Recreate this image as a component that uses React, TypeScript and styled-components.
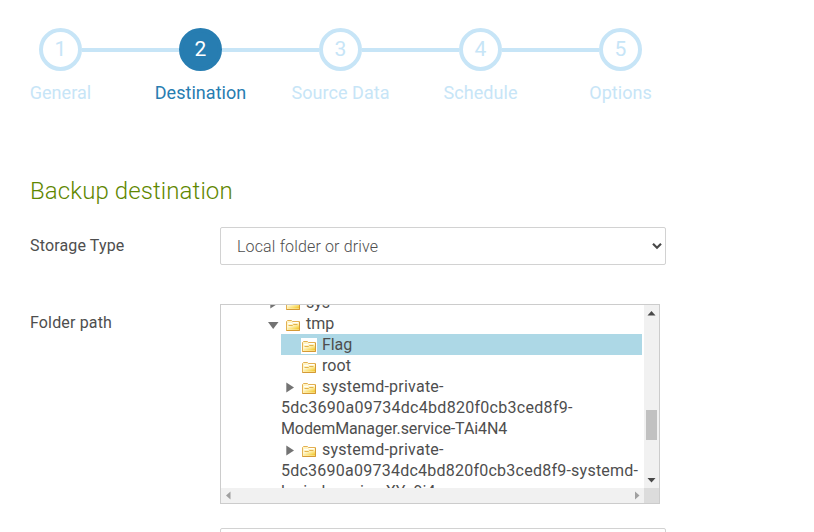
import React, { Fragment } from 'react';
import styled, { createGlobalStyle } from 'styled-components';

const GlobalStyle = createGlobalStyle`
  *, *::before, *::after { box-sizing: border-box; }
  body {
    margin: 0;
    background: #fff;
    color: #4e4e4e;
    font-family: Roboto, 'Liberation Sans', sans-serif;
    font-size: 16px;
    overflow: hidden;
  }
`;

const Page = styled.main`
  height: 532px;
  overflow: hidden;
  padding-top: 28px;
`;

const Steps = styled.nav`
  display: flex;
  padding-left: 39px;
  height: 76px;
`;

const Step = styled.div<{ $active?: boolean }>`
  display: flex;
  flex: none;
  flex-direction: column;
  align-items: center;
  width: 43px;
  color: ${(p) => (p.$active ? '#277db1' : '#c7e5f7')};
`;

const StepNumber = styled.span<{ $active?: boolean }>`
  display: flex;
  flex: none;
  align-items: center;
  justify-content: center;
  width: 43px;
  height: 43px;
  border: 4px solid ${(p) => (p.$active ? '#277db1' : '#c7e5f7')};
  border-radius: 50%;
  background: ${(p) => (p.$active ? '#277db1' : '#fff')};
  color: ${(p) => (p.$active ? '#fff' : 'inherit')};
  font-size: 21px;
  line-height: 35px;
`;

const StepLabel = styled.span`
  margin-top: 11px;
  font-size: 18px;
  line-height: 22px;
  letter-spacing: 0.05px;
  white-space: nowrap;
`;

const Connector = styled.span`
  flex: 0 0 97px;
  height: 4px;
  margin-top: 20px;
  background: #c7e5f7;
`;

const Title = styled.h2`
  margin: 71px 0 0 30px;
  color: #5f8700;
  font-size: 24px;
  font-weight: 300;
  line-height: 32px;
  letter-spacing: 0.1px;
`;

const Field = styled.div<{ $gap: number }>`
  display: grid;
  grid-template-columns: 190px auto;
  justify-content: start;
  align-items: start;
  margin: ${(p) => p.$gap}px 0 0 30px;
`;

const FieldLabel = styled.label`
  padding-top: 8px;
  line-height: 21px;
  letter-spacing: 0.15px;
`;

const SelectBox = styled.div`
  display: flex;
  grid-column: 2;
  align-items: center;
  justify-content: space-between;
  width: 446px;
  height: 38px;
  padding: 0 3px 0 16px;
  border: 1px solid #d2d2d2;
  border-radius: 2px;
  font-weight: 300;
  letter-spacing: 0.15px;
  line-height: 21px;
`;

const TreeBox = styled.div`
  display: grid;
  grid-template: 183px 15px / 423px 15px;
  width: 440px;
  height: 200px;
  border: 1px solid #ccc;
`;

const TreeViewport = styled.div`
  overflow: hidden;
  padding: 0 2px 0 44px;
  line-height: 21px;
  white-space: nowrap;
`;

const TreeList = styled.ul<{ $root?: boolean }>`
  list-style: none;
  margin: ${(p) => (p.$root ? '-13px 0 0' : '0 0 0 16px')};
  padding: 0;
`;

const NodeLine = styled.div<{ $selected?: boolean }>`
  display: flex;
  height: 21px;
  background: ${(p) => (p.$selected ? '#add8e6' : 'transparent')};
`;

const ArrowSlot = styled.span`
  display: flex;
  width: 20px;
  height: 21px;
`;

const FolderSlot = styled.span`
  display: flex;
  width: 16px;
  height: 16px;
  margin: 4px 5px 0 0;
  background: #fff;
`;

const NodeText = styled.span<{ $spacing?: number }>`
  display: block;
  letter-spacing: ${(p) => p.$spacing ?? 0}px;
`;

const VerticalBar = styled.div`
  display: flex;
  flex-direction: column;
  align-items: center;
  background: #f1f1f1;
`;

const Thumb = styled.div`
  flex: none;
  width: 11px;
  height: 30px;
  margin: 90px 0 33px;
  background: #c1c1c1;
`;

const HorizontalBar = styled.div`
  display: flex;
  justify-content: space-between;
  background: #f1f1f1;
`;

const Corner = styled.div`
  background: #dcdcdc;
`;

const Folder = () => (
  <svg width="16" height="16" viewBox="0 0 16 16">
    <defs>
      <linearGradient id="folderFill" x1="0" y1="0" x2="1" y2="1">
        <stop offset="0.2" stopColor="#fffbe0" />
        <stop offset="0.6" stopColor="#fbe27c" />
        <stop offset="1" stopColor="#efc01c" />
      </linearGradient>
    </defs>
    <path d="M1.5 13.5V4.5L2.5 3.5H6.5L7.5 4.5H14.5V13.5Z" fill="#fff4c4" stroke="#e3b052" />
    <path d="M3 6.5H7L8 5.5H13" fill="none" stroke="#fff" />
    <path d="M2.5 12.5V8.5H7.5L8.5 7.5H14V12.5Z" fill="url(#folderFill)" />
    <path d="M3.5 8.5H7.5L8.5 7.5H12.5" fill="none" stroke="#e4b44e" />
    <path d="M1.5 13.5H14.5V5" fill="none" stroke="#d59a35" />
  </svg>
);

const Arrow = ({ open }: { open?: boolean }) => (
  <svg width="20" height="21" viewBox="0 0 20 21">
    <path d={open ? 'M3 9H13.5L8.2 16Z' : 'M5.3 6.5L13 11.5L5.3 16.5Z'} fill="#737373" />
  </svg>
);

const scrollArrows = {
  up: 'M3.5 10.5L7.5 6L11.5 10.5Z',
  down: 'M3.5 5L7.5 9.5L11.5 5Z',
  left: 'M9.5 3.5L5 7.5L9.5 11.5Z',
  right: 'M6 3.5L10.5 7.5L6 11.5Z',
};

const ScrollArrow = ({ to }: { to: keyof typeof scrollArrows }) => (
  <svg width="15" height="15" viewBox="0 0 15 15">
    <path d={scrollArrows[to]} fill={to === 'up' || to === 'down' ? '#484848' : '#a0a0a0'} />
  </svg>
);

interface NodeData {
  lines: [string, number?][];
  state?: 'open' | 'closed';
  selected?: boolean;
  children?: NodeData[];
}

const tree: NodeData[] = [
  { lines: [['sys']], state: 'closed' },
  {
    lines: [['tmp']],
    state: 'open',
    children: [
      { lines: [['Flag', -0.1]], selected: true },
      { lines: [['root', 0.1]] },
      {
        lines: [
          ['systemd-private-', 0.23],
          ['5dc3690a09734dc4bd820f0cb3ced8f9-', 0.29],
          ['ModemManager.service-TAi4N4', -0.1],
        ],
        state: 'closed',
      },
      {
        lines: [
          ['systemd-private-', 0.23],
          ['5dc3690a09734dc4bd820f0cb3ced8f9-systemd-', 0.24],
          ['logind.service-XYs9i4', 0.1],
        ],
        state: 'closed',
      },
    ],
  },
];

const TreeNode = ({ node }: { node: NodeData }) => {
  const [[name, spacing], ...rest] = node.lines;
  return (
    <li>
      <NodeLine $selected={node.selected}>
        <ArrowSlot>{node.state && <Arrow open={node.state === 'open'} />}</ArrowSlot>
        <FolderSlot>
          <Folder />
        </FolderSlot>
        <NodeText $spacing={spacing}>{name}</NodeText>
      </NodeLine>
      {rest.map(([text, gap]) => (
        <NodeText key={text} $spacing={gap}>
          {text}
        </NodeText>
      ))}
      {node.children && (
        <TreeList>
          {node.children.map((child, i) => (
            <TreeNode key={i} node={child} />
          ))}
        </TreeList>
      )}
    </li>
  );
};

const steps = ['General', 'Destination', 'Source Data', 'Schedule', 'Options'];

export default function App() {
  return (
    <Page>
      <GlobalStyle />
      <Steps>
        {steps.map((name, i) => (
          <Fragment key={name}>
            {i > 0 && <Connector />}
            <Step $active={i === 1}>
              <StepNumber $active={i === 1}>{i + 1}</StepNumber>
              <StepLabel>{name}</StepLabel>
            </Step>
          </Fragment>
        ))}
      </Steps>
      <Title>Backup destination</Title>
      <Field $gap={20}>
        <FieldLabel>Storage Type</FieldLabel>
        <SelectBox>
          Local folder or drive
          <svg width="10" height="8" viewBox="0 0 10 8">
            <path d="M1 1.8L5 5.7L9 1.8" fill="none" stroke="#484848" strokeWidth="2.2" />
          </svg>
        </SelectBox>
      </Field>
      <Field $gap={39}>
        <FieldLabel>Folder path</FieldLabel>
        <TreeBox>
          <TreeViewport>
            <TreeList $root>
              {tree.map((node, i) => (
                <TreeNode key={i} node={node} />
              ))}
            </TreeList>
          </TreeViewport>
          <VerticalBar>
            <ScrollArrow to="up" />
            <Thumb />
            <ScrollArrow to="down" />
          </VerticalBar>
          <HorizontalBar>
            <ScrollArrow to="left" />
            <ScrollArrow to="right" />
          </HorizontalBar>
          <Corner />
        </TreeBox>
      </Field>
      <Field $gap={24}>
        <SelectBox />
      </Field>
    </Page>
  );
}
